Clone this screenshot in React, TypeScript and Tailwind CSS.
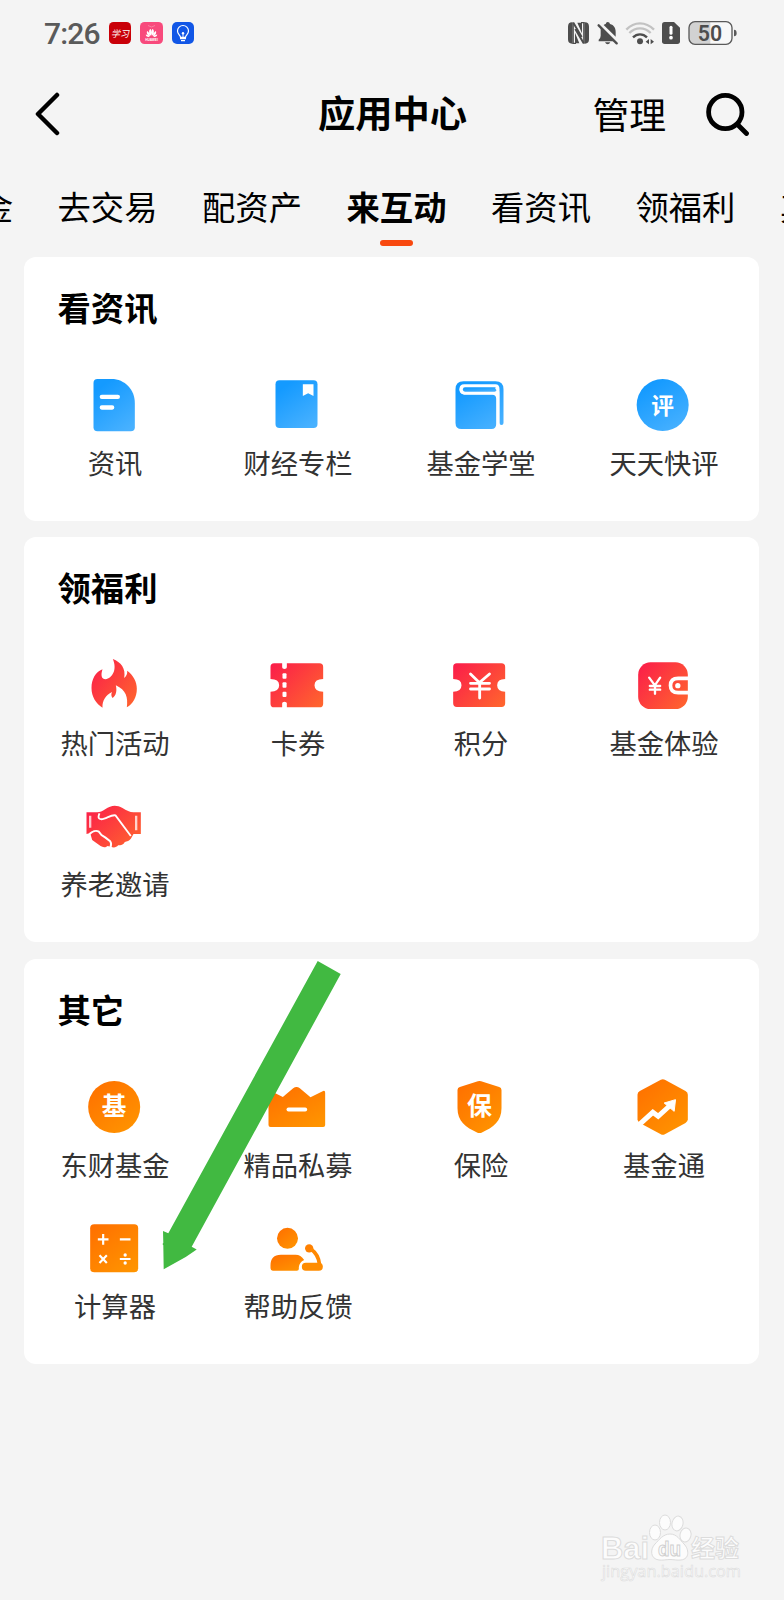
import type { ReactNode } from 'react'

const BLUE = 'url(#g-blue)'
const RED = 'url(#g-red)'
const ORANGE = 'url(#g-orange)'

const CJK = "font-['Noto_Sans_CJK_SC',sans-serif]"

interface AppItem {
  label: string
  icon: ReactNode
}

interface Section {
  title: string
  items: AppItem[]
}

function Icon({ box, children }: { box: string; children: ReactNode }) {
  return (
    <svg className="w-16 h-16 mr-px" viewBox={box} fill="none">
      {children}
    </svg>
  )
}

function Gradients() {
  return (
    <svg className="absolute w-0 h-0" aria-hidden="true">
      <defs>
        <linearGradient id="g-blue" x1="0.2" y1="0" x2="0.8" y2="1">
          <stop offset="0.1" stopColor="#149aff" />
          <stop offset="1" stopColor="#48b1ff" />
        </linearGradient>
        <linearGradient id="g-red" x1="0" y1="0.1" x2="1" y2="0.9">
          <stop offset="0" stopColor="#fb1f49" />
          <stop offset="1" stopColor="#ff642e" />
        </linearGradient>
        <linearGradient id="g-orange" x1="0.1" y1="0" x2="0.9" y2="1">
          <stop offset="0" stopColor="#ff7000" />
          <stop offset="1" stopColor="#ff9500" />
        </linearGradient>
      </defs>
    </svg>
  )
}

const sections: Section[] = [
  {
    title: '看资讯',
    items: [
      {
        label: '资讯',
        icon: (
          <Icon box="190.5 369 192 192">
            <path d="M234 387h42c40 0 70 32 70 72v73q0 12-12 12H234q-12 0-12-12V399q0-12 12-12z" fill={BLUE} />
            <path d="M247 440.500h48M247 472.500h31" stroke="#fff" strokeWidth="13" strokeLinecap="round" />
          </Icon>
        ),
      },
      {
        label: '财经专栏',
        icon: (
          <Icon box="739.5 369 192 192">
            <rect x="768" y="391" width="126" height="143" rx="12" fill={BLUE} />
            <path d="M850 403h32v35l-16-8-16 8z" fill="#fff" />
          </Icon>
        ),
      },
      {
        label: '基金学堂',
        icon: (
          <Icon box="172.5 69 192 192">
            <path d="M216 94h96q24 0 24 24v101q0 6-6 6t-6-6v-101q0-15-12-15h-94q-14 0-14 15t14 16h84q12 0 12 12v77q0 14-14 14h-90q-18 0-18-18V118q0-24 24-24z" fill={BLUE} />
            <rect x="204" y="105" width="112" height="28" rx="14" fill="#fff" />
            <rect x="214" y="112" width="102" height="13" rx="6.500" fill={BLUE} />
            <path d="M313 112q7 5 7 18v104" stroke="#fff" strokeWidth="7" />
          </Icon>
        ),
      },
      {
        label: '天天快评',
        icon: (
          <Icon box="721.5 69 192 192">
            <circle cx="813.500" cy="165" r="78" fill={BLUE} />
            <text x="813.500" y="192" textAnchor="middle" fontSize="68" fontWeight="700" fill="#fff" className={CJK}>
              评
            </text>
          </Icon>
        ),
      },
    ],
  },
  {
    title: '领福利',
    items: [
      {
        label: '热门活动',
        icon: (
          <Icon box="-1.5 9 192 192">
            <path
              d="M88 27C112 36 128 56 122 84C129 78 132 71 131 62C150 76 160 95 160 116C160 142 148 162 130 172C134 142 128 120 97 106C101 122 98 138 87 144C83 138 82 132 86 126C66 136 56 152 57 173C38 162 24 140 24 114C24 88 36 66 57 58C51 76 54 88 66 88C86 84 102 60 88 27z"
              fill={RED}
            />
          </Icon>
        ),
      },
      {
        label: '卡券',
        icon: (
          <Icon box="739.5 369 192 192">
            <path
              d="M764 400h24v12q0 5 7 5t7-5v-12h98q11 0 11 11v36q-26 0-26 19t26 19v36q0 11-11 11h-98v-12q0-5-7-5t-7 5v12h-24q-11 0-11-11v-36q26 0 26-19t-26-19v-36q0-11 11-11z"
              fill={RED}
            />
            <g fill="#fff">
              <rect x="789" y="430" width="12" height="16" rx="3" />
              <rect x="789" y="457" width="12" height="16" rx="3" />
              <rect x="789" y="485" width="12" height="16" rx="3" />
            </g>
          </Icon>
        ),
      },
      {
        label: '积分',
        icon: (
          <Icon box="172.5 39 192 192">
            <path
              d="M196 70h134q11 0 11 11v36q-24 0-24 19t24 19v35q0 11-11 11H196q-11 0-11-11v-35q25 0 25-19t-25-19V81q0-11 11-11z"
              fill={RED}
            />
            <path d="M237 102l27 26 30-26M237 130h57M237 147h57M264.500 130v44" stroke="#fff" strokeWidth="8.500" strokeLinecap="round" />
          </Icon>
        ),
      },
      {
        label: '基金体验',
        icon: (
          <Icon box="721.5 39 192 192">
            <rect x="740" y="67" width="149" height="140" rx="37" fill={RED} />
            <path d="M891 115h-31q-23 0-23 21.500t23 21.500h31" stroke="#fff" strokeWidth="11" />
            <circle cx="859" cy="137" r="8" fill="#fff" />
            <path d="M773 113l17 23 16-23M775 138h31M775 149h31M790.500 136v25" stroke="#fff" strokeWidth="7" strokeLinecap="round" />
          </Icon>
        ),
      },
      {
        label: '养老邀请',
        icon: (
          <Icon box="190.5 42 192 192">
            <path
              d="M201 97h32c8 0 16-3 24-9 18-13 34-14 52-4 12 7 22 13 33 13h22v65h-22l-8 14c-4 6-12 8-18 10-4 8-12 10-20 10-6 7-14 8-22 4l-10-2c-8 8-18 2-24-2l-22-16-6-21-11 3H201z"
              fill={RED}
            />
            <path d="M240 100c-8 17 2 20 14 16 14-5 22-12 34-10l46 62" stroke="#fff" strokeWidth="5.500" />
            <path d="M210 162c8-8 20-12 28-7l8 10 12 8 14 11c5 5 3 11 1 18" stroke="#fff" strokeWidth="6" />
            <path d="M212 107v36M350 107v44" stroke="#fff" strokeOpacity="0.75" strokeWidth="7" />
          </Icon>
        ),
      },
    ],
  },
  {
    title: '其它',
    items: [
      {
        label: '东财基金',
        icon: (
          <Icon box="190.5 45 192 192">
            <circle cx="284" cy="141" r="78" fill={ORANGE} />
            <text x="284" y="166" textAnchor="middle" fontSize="74" fontWeight="700" fill="#fff" className={CJK}>
              基
            </text>
          </Icon>
        ),
      },
      {
        label: '精品私募',
        icon: (
          <Icon box="739.5 45 192 192">
            <path
              d="M747 98q0-7 7-5l36 18 31-26q10-8 20 0l32 27 38-19q6-2 6 5v97q0 6-6 6H753q-6 0-6-6z"
              fill={ORANGE}
            />
            <path d="M807 148.500h50" stroke="#fff" strokeWidth="12" strokeLinecap="round" />
          </Icon>
        ),
      },
      {
        label: '保险',
        icon: (
          <Icon box="172.5 45 192 192">
            <path
              d="M259 64q5-2 10 0l54 17q7 2 7 9v55c0 38-24 58-60 73q-6 2-12 0c-36-15-60-35-60-73V90q0-7 7-9z"
              fill={ORANGE}
            />
            <text x="264" y="166" textAnchor="middle" fontSize="75" fontWeight="700" fill="#fff" className={CJK}>
              保
            </text>
          </Icon>
        ),
      },
      {
        label: '基金通',
        icon: (
          <Icon box="721.5 45 192 192">
            <path d="M808 59q6-3 12 0l62 34q7 4 7 11v74q0 7-7 11l-62 34q-6 3-12 0l-63-34q-7-4-7-11v-74q0-7 7-11z" fill={ORANGE} />
            <path d="M744 193l40-36 16 12 34-31" stroke="#fff" strokeWidth="15" />
            <path d="M818 129l34-10-4 35z" fill="#fff" stroke="#fff" strokeWidth="3" strokeLinejoin="round" />
          </Icon>
        ),
      },
      {
        label: '计算器',
        icon: (
          <Icon box="190.5 468 192 192">
            <rect x="212" y="493" width="144" height="144" rx="12" fill={ORANGE} />
            <path
              d="M235 538h32M251 522v32M301 538h32M240 586l22 23M262 586l-22 23M301 597h32"
              stroke="#fff"
              strokeWidth="6.500"
            />
            <circle cx="317" cy="585" r="5" fill="#fff" />
            <circle cx="317" cy="609" r="5" fill="#fff" />
          </Icon>
        ),
      },
      {
        label: '帮助反馈',
        icon: (
          <Icon box="739.5 468 192 192">
            <circle cx="804" cy="535" r="31.500" fill={ORANGE} />
            <path d="M784 584h44q16 0 26 16c-10 4-15 12-16 22v5q0 5-6 5h-72q-7 0-7-7v-9q0-32 31-32z" fill={ORANGE} />
            <circle cx="869" cy="565" r="12.500" fill="#ff8000" />
            <path d="M874 567c17 12 24 26 26 46" stroke="#ff8800" strokeWidth="11" />
            <rect x="847" y="608" width="63" height="24" rx="12" fill="#ff8c00" />
          </Icon>
        ),
      },
    ],
  },
]

const tabs = ['金', '去交易', '配资产', '来互动', '看资讯', '领福利', '其它']

function StatusBar() {
  return (
    <div className="h-[66px] flex items-center justify-between pl-[44px] pr-[46px]">
      <div className="flex items-center">
        <span className="w-[65px] pt-[2px] font-['Roboto',sans-serif] font-medium text-[30px] leading-none text-[#5a5a5a] tracking-[-0.8px]">
          7:26
        </span>
        <div className="flex gap-[9px]">
          <svg className="w-[22px] h-[22px]" viewBox="0 0 22 22">
            <rect width="22" height="22" rx="4.500" fill="#c90008" />
            <text x="11" y="14.500" textAnchor="middle" fontSize="9" fontStyle="italic" fill="#fff" className={CJK}>
              学习
            </text>
          </svg>
          <svg className="w-[23px] h-[22px]" viewBox="0 0 23 22">
            <rect width="23" height="22" rx="4.500" fill="#f84a7c" />
            <g fill="#fff">
              <path d="M11 14C8 11 9 7 10.700 7c1 2 1 4 .3 7zM12 14c3-3 2-7 .3-7-1 2-1 4-.3 7zM10 14.500C6.500 13 6.500 10 7.200 9 9 10 10 12 10 14.500zM13 14.500c3.500-1.500 3.500-4.500 2.800-5.500-1.800 1-2.800 3-2.800 5.500zM9.500 15c-2.500.3-3.700-1-3.700-2.500 1.500 0 3 1 3.700 2.500zM13.500 15c2.500.3 3.700-1 3.700-2.500-1.500 0-3 1-3.700 2.500z" />
              <text x="11.500" y="19.200" textAnchor="middle" fontSize="3.200" fontWeight="700" className="font-['Liberation_Sans',sans-serif]">
                HUAWEI
              </text>
            </g>
            <path d="M8 3.500l3.500 1.500L15 3.500" stroke="#f98aa8" strokeWidth="0.800" fill="none" />
          </svg>
          <svg className="w-[22px] h-[22px]" viewBox="0 0 22 22" fill="none" stroke="#fff">
            <rect width="22" height="22" rx="5" fill="#1156e6" stroke="none" />
            <path d="M8.500 15.300c0-1.800-3-2.800-3-6.300a5.500 5.500 0 0 1 11 0c0 3.500-3 4.500-3 6.300z" strokeWidth="1.200" />
            <path d="M8 16.500h6M9 18.600h4" strokeWidth="1.300" />
            <path d="M11 15v-3" strokeWidth="0.900" />
            <circle cx="11" cy="11.200" r="1.200" fill="#fff" stroke="none" />
          </svg>
        </div>
      </div>
      <div className="flex items-center text-[#4d4d4d]">
        <svg className="w-[21px] h-[22px]" viewBox="528 66 63 66">
          <path d="M540 67v64q-12 0-12-13V80q0-13 12-13zM579 67v64q12 0 12-13V80q0-13-12-13z" fill="currentColor" />
          <path d="M544 68l25 43M550 87l25 43" stroke="currentColor" strokeWidth="6" />
          <path d="M543 67v64h9M576 131V67h-9" stroke="currentColor" strokeWidth="5" fill="none" />
          <path d="M549 98v32h13zM570 100V68h-14z" fill="currentColor" />
        </svg>
        <svg className="ml-2 w-[21px] h-[23px]" viewBox="613 65 63 69">
          <path d="M645 65q6 0 7 6c12 3 17 12 17 24v14l-36-35q4-3 6-3 1-6 6-6zM624 84l40 39h-46v-5q6-5 6-12z" fill="currentColor" />
          <path d="M618 75l54 54" stroke="currentColor" strokeWidth="7" strokeLinecap="round" />
          <path d="M637 126h16q-3 6-8 6t-8-6z" fill="currentColor" />
        </svg>
        <svg className="ml-[7px] w-[30px] h-[23px]" viewBox="697 65 90 69" fill="none" strokeWidth="7">
          <path d="M701 88q18-19 41-19t42 19" stroke="#c2c2c2" />
          <path d="M710 98q14-14 32-14t32 14" stroke="#c2c2c2" />
          <path d="M721 111q9-9 21-9t21 9" stroke="currentColor" />
          <circle cx="742" cy="123" r="9" fill="currentColor" />
          <path d="M759 124l10-8v16zM784 124l-10-8v16z" fill="currentColor" />
        </svg>
        <svg className="ml-[7px] w-[18px] h-[22px]" viewBox="810 66 54 66">
          <path d="M818 66h28l18 17v41q0 8-8 8h-38q-8 0-8-8V74q0-8 8-8z" fill="currentColor" />
          <path d="M837 82v18" stroke="#fff" strokeWidth="9" strokeLinecap="round" />
          <circle cx="837" cy="113" r="5.500" fill="#fff" />
        </svg>
        <svg className="ml-2 w-[50px] h-[24px] overflow-visible" viewBox="887 63 150 72">
          <rect x="890" y="65" width="129" height="68" rx="18" fill="#f8f8f8" />
          <path d="M908 65h46v68h-46q-18 0-18-18V83q0-18 18-18z" fill="#d2d2d2" />
          <rect x="890" y="65" width="129" height="68" rx="18" fill="none" stroke="#5a5a5a" strokeWidth="4" />
          <path d="M1025 89q8 0 8 10t-8 10z" fill="#5a5a5a" />
          <text x="953" y="122" textAnchor="middle" fontSize="64" fontWeight="600" fill="#4d4d4d" className="font-['Roboto',sans-serif]">
            50
          </text>
        </svg>
      </div>
    </div>
  )
}

function Header() {
  return (
    <div className="h-24 grid grid-cols-[1fr_auto_1fr] items-center pl-[35px] pr-[34px] text-black">
      <svg className="w-[26px] h-[44px]" viewBox="0 0 26 44" fill="none" stroke="currentColor" strokeWidth="4.500" strokeLinecap="round" strokeLinejoin="round">
        <path d="M22 3L3 22l19 19" />
      </svg>
      <h1 className="text-[37.300px] leading-[50px] pb-[4px] font-bold">应用中心</h1>
      <div className="flex items-center justify-end gap-[40px]">
        <span className="text-[36.800px] leading-[50px] pb-[3px]">管理</span>
        <svg className="w-[44px] h-[44px]" viewBox="0 0 44 44" fill="none" stroke="currentColor" strokeWidth="4.800" strokeLinecap="round">
          <circle cx="19.300" cy="20" r="16.700" />
          <path d="M32 33l8.500 8.500" />
        </svg>
      </div>
    </div>
  )
}

function TabBar() {
  return (
    <div className="h-[95px] pt-[19px] flex gap-[44.500px] overflow-hidden">
      {tabs.map((tab) => (
        <div key={tab} className="first:-ml-[20.300px] shrink-0 flex flex-col items-center text-[33.330px] leading-[50px] text-black">
          <span className={tab === '来互动' ? 'font-bold' : ''}>{tab}</span>
          {tab === '来互动' && <span className="mt-[9px] w-[33px] h-[6px] rounded-full bg-[#f8480f]" />}
        </div>
      ))}
    </div>
  )
}

function SectionCard({ title, items }: Section) {
  return (
    <section className="bg-white rounded-xl pt-[25px] pb-[39px]">
      <h2 className="pl-[33.500px] text-[33.330px] leading-[50px] font-bold text-black">{title}</h2>
      <div className="mt-[41px] grid grid-cols-[repeat(4,183px)] gap-y-[32px]">
        {items.map((item) => (
          <div key={item.label} className="flex flex-col items-center">
            {item.icon}
            <span className="mt-[5px] -ml-px text-[27.300px] leading-[40px] text-[#333333]">{item.label}</span>
          </div>
        ))}
      </div>
    </section>
  )
}

function Watermark() {
  return (
    <svg className="absolute left-[594px] top-[1510px] w-[160px] h-[80px]" viewBox="0 0 160 80" fill="#fcfcfc" stroke="#dcdcdc" strokeWidth="1">
      <text x="7" y="49" fontSize="31" fontWeight="700" textLength="48" lengthAdjust="spacingAndGlyphs" className="font-['Liberation_Sans',sans-serif]">
        Bai
      </text>
      <ellipse cx="61" cy="22.500" rx="5.500" ry="7.500" />
      <ellipse cx="71" cy="12.500" rx="5.500" ry="7.500" />
      <ellipse cx="83.500" cy="13.500" rx="5.500" ry="7.500" transform="rotate(12 83.500 13.500)" />
      <ellipse cx="91.500" cy="25" rx="5.500" ry="7" transform="rotate(15 91.500 25)" />
      <path d="M76 24c7 0 10 6 14 10 5 5 6 15-3 16-4 .5-7-.5-11-.5s-7 1-11 .5c-9-1-9-11-4-16 4-4 8-10 15-10z" />
      <text x="64" y="46" fontSize="21" fontWeight="700" textLength="23" lengthAdjust="spacingAndGlyphs" stroke="#cfcfcf" className="font-['Liberation_Sans',sans-serif]">
        du
      </text>
      <text x="97" y="47" fontSize="24" fontWeight="700" className={CJK}>
        经验
      </text>
      <text x="8" y="67" fontSize="17" textLength="139" lengthAdjust="spacingAndGlyphs" strokeWidth="0.600" className="font-['Open_Sans',sans-serif]">
        jingyan.baidu.com
      </text>
    </svg>
  )
}

export default function App() {
  return (
    <div className="relative w-[784px] h-[1600px] overflow-hidden bg-[#f4f4f4] font-['Noto_Sans_CJK_SC',sans-serif]">
      <Gradients />
      <StatusBar />
      <Header />
      <TabBar />
      <main className="pl-6 pr-[25.400px] flex flex-col gap-[16.300px]">
        {sections.map((section) => (
          <SectionCard key={section.title} title={section.title} items={section.items} />
        ))}
      </main>
      {/* arrow pointing at the calculator */}
      <svg className="absolute left-[160px] top-[955px] w-[190px] h-[320px]" viewBox="160 955 190 320">
        <path
          d="M317.700 961l23 13-149 272.700 5 2.700-11 7.500-22 12.400-.4-24-.8-1.300.8-1-.3-12 5.300 2.300z"
          fill="#41b941"
        />
      </svg>
      <Watermark />
    </div>
  )
}
